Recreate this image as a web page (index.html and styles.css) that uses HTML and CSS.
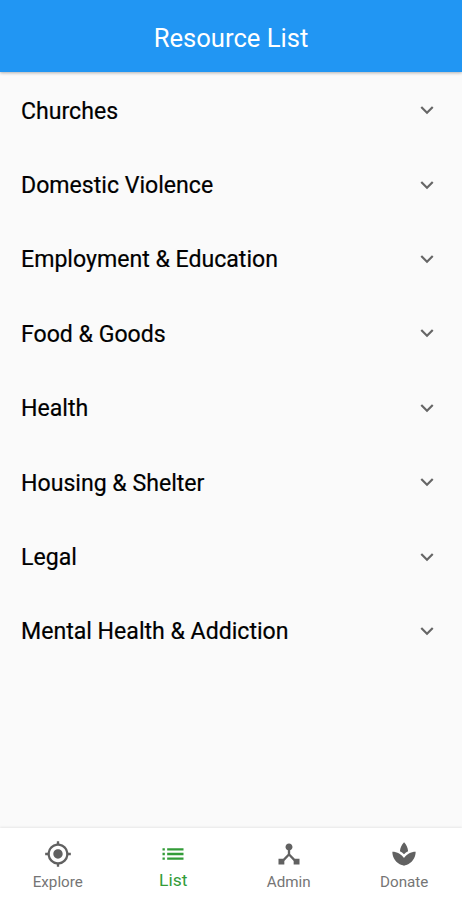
FILE: index.html
```html
<!DOCTYPE html>
<html lang="en">

<head>
    <meta charset="UTF-8">
    <meta name="viewport" content="width=device-width, initial-scale=1.0">
    <title>Resource List</title>
    <link rel="stylesheet" href="styles.css">
</head>

<body>

    <header class="app-bar">
        <h1>Resource List</h1>
    </header>

    <ul class="resources">
        <li><span>Churches</span><svg viewBox="0 0 24 24"><path d="M16.59 8.59 12 13.17 7.41 8.59 6 10l6 6 6-6z"/></svg></li>
        <li><span>Domestic Violence</span><svg viewBox="0 0 24 24"><path d="M16.59 8.59 12 13.17 7.41 8.59 6 10l6 6 6-6z"/></svg></li>
        <li><span>Employment &amp; Education</span><svg viewBox="0 0 24 24"><path d="M16.59 8.59 12 13.17 7.41 8.59 6 10l6 6 6-6z"/></svg></li>
        <li><span>Food &amp; Goods</span><svg viewBox="0 0 24 24"><path d="M16.59 8.59 12 13.17 7.41 8.59 6 10l6 6 6-6z"/></svg></li>
        <li><span>Health</span><svg viewBox="0 0 24 24"><path d="M16.59 8.59 12 13.17 7.41 8.59 6 10l6 6 6-6z"/></svg></li>
        <li><span>Housing &amp; Shelter</span><svg viewBox="0 0 24 24"><path d="M16.59 8.59 12 13.17 7.41 8.59 6 10l6 6 6-6z"/></svg></li>
        <li><span>Legal</span><svg viewBox="0 0 24 24"><path d="M16.59 8.59 12 13.17 7.41 8.59 6 10l6 6 6-6z"/></svg></li>
        <li><span>Mental Health &amp; Addiction</span><svg viewBox="0 0 24 24"><path d="M16.59 8.59 12 13.17 7.41 8.59 6 10l6 6 6-6z"/></svg></li>
    </ul>

    <nav class="bottom-nav">
        <a class="tab">
            <svg viewBox="0 0 24 24"><path d="M12 8c-2.21 0-4 1.79-4 4s1.79 4 4 4 4-1.79 4-4-1.79-4-4-4zm8.94 3A8.994 8.994 0 0 0 13 3.06V1h-2v2.06A8.994 8.994 0 0 0 3.06 11H1v2h2.06A8.994 8.994 0 0 0 11 20.94V23h2v-2.06A8.994 8.994 0 0 0 20.94 13H23v-2h-2.06zM12 19c-3.87 0-7-3.13-7-7s3.13-7 7-7 7 3.13 7 7-3.13 7-7 7z"/></svg>
            <span>Explore</span>
        </a>
        <a class="tab active">
            <svg viewBox="0 0 24 24"><path d="M3 13h2v-2H3v2zm0 4h2v-2H3v2zm0-8h2V7H3v2zm4 4h14v-2H7v2zm0 4h14v-2H7v2zM7 7v2h14V7H7z"/></svg>
            <span>List</span>
        </a>
        <a class="tab">
            <svg viewBox="0 0 24 24"><path d="M17 16l-4-4V8.82C14.16 8.4 15 7.3 15 6c0-1.66-1.34-3-3-3S9 4.34 9 6c0 1.3.84 2.4 2 2.82V12l-4 4H3v5h5v-3.05l4-4.2 4 4.2V21h5v-5h-4z"/></svg>
            <span>Admin</span>
        </a>
        <a class="tab">
            <svg viewBox="0 0 24 24"><path d="M15.49 9.63c-.18-2.79-1.31-5.51-3.43-7.63-2.14 2.14-3.32 4.86-3.55 7.63 1.28.68 2.46 1.56 3.49 2.63 1.03-1.06 2.21-1.94 3.49-2.63zM12 15.45C9.85 12.17 6.18 10 2 10c0 5.32 3.36 9.82 8.03 11.49.63.23 1.29.4 1.97.51.68-.12 1.33-.29 1.97-.51C18.64 19.82 22 15.32 22 10c-4.18 0-7.85 2.17-10 5.45z"/></svg>
            <span>Donate</span>
        </a>
    </nav>

</body>

</html>
```
FILE: styles.css
```css
body {
    background-color: #fafafa;
    color: #000;
    font-family: Roboto, sans-serif;
    margin: 0;
    height: 100vh;
    display: flex;
    flex-direction: column;
}

.app-bar {
    background-color: #2196f3;
    color: white;
    height: 72px;
    flex-shrink: 0;
    display: flex;
    justify-content: center;
    align-items: center;
    padding-top: 4px;
    box-sizing: border-box;
    box-shadow: 0 1px 3px rgba(0, 0, 0, 0.3);
}

.app-bar h1 {
    font-size: 25.6px;
    font-weight: 400;
    margin: 0;
}

.resources {
    list-style: none;
    flex: 1;
    margin: 0;
    padding: 1px 0 0;
}

.resources li {
    height: 74.4px;
    padding: 0 22px 0 21px;
    display: flex;
    justify-content: space-between;
    align-items: center;
    font-size: 23.1px;
    -webkit-text-stroke: 0.2px #000;
}

.resources span {
    padding-top: 2px;
}

.resources svg {
    width: 26px;
    height: 26px;
    fill: #666;
}

.bottom-nav {
    background-color: white;
    height: 72px;
    flex-shrink: 0;
    display: flex;
    box-shadow: 0 -1px 2px rgba(0, 0, 0, 0.08);
}

.tab {
    flex: 1;
    display: flex;
    flex-direction: column;
    align-items: center;
    padding-top: 12px;
    color: #757575;
    font-size: 15.2px;
}

.tab svg {
    width: 28px;
    height: 28px;
    fill: #616161;
}

.tab span {
    line-height: 18px;
    margin-top: 5px;
}

.active {
    color: #339c38;
}

.active svg {
    fill: #339c38;
}

.active span {
    font-size: 17.4px;
    margin-top: 3px;
}
```
